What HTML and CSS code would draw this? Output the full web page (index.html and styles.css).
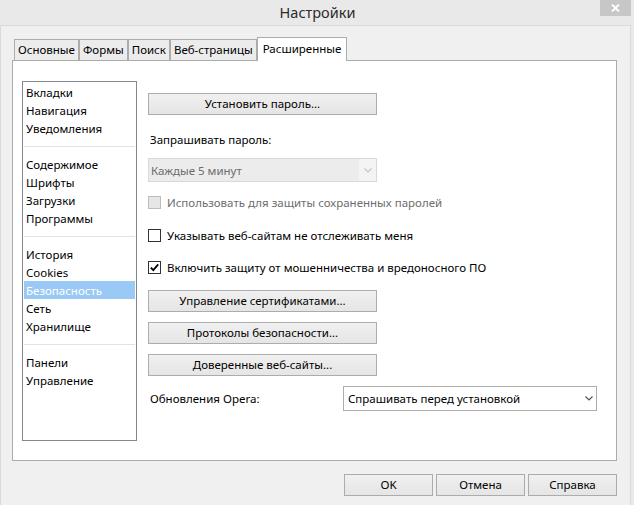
FILE: index.html
```html
<!DOCTYPE html>
<html lang="ru">
<head>
<meta charset="utf-8">
<title>Настройки</title>
<link rel="stylesheet" href="styles.css">
</head>
<body>
<div class="titlebar">
  <span class="title">Настройки</span>
  <div class="close"><svg width="9" height="8" viewBox="0 0 9 8"><path d="M1 0.5 L8 7.5 M8 0.5 L1 7.5" stroke="#fff" stroke-width="1.8"/></svg></div>
</div>
<div class="client">
  <div class="tabs">
    <div class="tab">Основные</div>
    <div class="tab">Формы</div>
    <div class="tab">Поиск</div>
    <div class="tab">Веб-страницы</div>
    <div class="tab active">Расширенные</div>
  </div>
  <div class="panel">
    <ul class="nav">
      <li>Вкладки</li>
      <li>Навигация</li>
      <li>Уведомления</li>
      <li class="sep"></li>
      <li>Содержимое</li>
      <li>Шрифты</li>
      <li>Загрузки</li>
      <li>Программы</li>
      <li class="sep"></li>
      <li>История</li>
      <li>Cookies</li>
      <li class="selected">Безопасность</li>
      <li>Сеть</li>
      <li>Хранилище</li>
      <li class="sep"></li>
      <li>Панели</li>
      <li>Управление</li>
    </ul>
    <div class="content">
      <div class="btn wide first">Установить пароль...</div>
      <div class="label ask">Запрашивать пароль:</div>
      <div class="select disabled">
        <span class="value">Каждые 5 минут</span>
        <span class="arrow"><svg width="8" height="5" viewBox="0 0 8 5"><path d="M0.5 0.5 L4 4 L7.5 0.5" fill="none" stroke="#c4c4c4" stroke-width="1.2"/></svg></span>
      </div>
      <div class="check disabled c1"><span class="box"></span>Использовать для защиты сохраненных паролей</div>
      <div class="check c2"><span class="box"></span>Указывать веб-сайтам не отслеживать меня</div>
      <div class="check c3"><span class="box"><svg width="11" height="11" viewBox="0 0 11 11"><path d="M1.8 5.6 L4.3 8.2 L9.2 2.4" fill="none" stroke="#000" stroke-width="1.8"/></svg></span>Включить защиту от мошенничества и вредоносного ПО</div>
      <div class="btn wide b1">Управление сертификатами...</div>
      <div class="btn wide b2">Протоколы безопасности...</div>
      <div class="btn wide b2">Доверенные веб-сайты...</div>
      <div class="update-row">
        <span class="label update-label">Обновления Opera:</span>
        <div class="select update">
          <span class="value">Спрашивать перед установкой</span>
          <span class="arrow"><svg width="8" height="5" viewBox="0 0 8 5"><path d="M0.5 0.5 L4 4 L7.5 0.5" fill="none" stroke="#555" stroke-width="1.2"/></svg></span>
        </div>
      </div>
    </div>
  </div>
  <div class="footer">
    <div class="btn action">OK</div>
    <div class="btn action">Отмена</div>
    <div class="btn action">Справка</div>
  </div>
</div>
</body>
</html>
```
FILE: styles.css
```css
* { box-sizing: border-box; }
html, body {
  margin: 0;
  padding: 0;
}
body {
  width: 634px;
  height: 505px;
  overflow: hidden;
  background: #e9e9e9;
  font-family: "Noto Sans", "Open Sans", sans-serif;
  font-size: 11.5px;
  color: #000;
}
.titlebar {
  position: relative;
  height: 25px;
  text-align: center;
}
.title {
  display: inline-block;
  font-size: 14.5px;
  line-height: 25px;
  color: #2b2b2b;
  padding-left: 1px;
}
.close {
  position: absolute;
  top: 0;
  right: 3px;
  width: 31px;
  height: 16px;
  background: #c7c7c7;
  display: flex;
  align-items: center;
  justify-content: center;
}
.client {
  margin-right: 3px;
  height: 480px;
  background: #f0f0f0;
  border: 1px solid #dadada;
  border-bottom: none;
  padding: 11px 13px 0 11px;
}
.tabs {
  display: flex;
  align-items: flex-end;
  height: 23px;
  padding-left: 2px;
}
.tab {
  height: 21px;
  line-height: 20px;
  padding: 0 3px;
  border: 1px solid #acacac;
  border-bottom: none;
  background: #ececec;
  white-space: nowrap;
}
.tab.active {
  position: relative;
  z-index: 1;
  height: 24px;
  margin-bottom: -1px;
  line-height: 22px;
  padding: 0 5px;
  background: #fff;
}
.panel {
  display: flex;
  height: 401px;
  background: #fff;
  border: 1px solid #acacac;
  padding: 20px 9px 19px 9px;
}
.nav {
  list-style: none;
  margin: 0;
  width: 115px;
  height: 360px;
  border: 1px solid #828790;
  padding: 1px;
  flex-shrink: 0;
}
.nav li {
  height: 18px;
  line-height: 19px;
  padding-left: 2px;
  white-space: nowrap;
}
.nav li.sep {
  height: 1px;
  margin: 9px 0 8px;
  background: #e3e3e3;
}
.nav li.selected {
  background: #99c9f4;
  color: #fff;
}
.content {
  margin-left: 11px;
  display: flex;
  flex-direction: column;
  align-items: flex-start;
}
.btn {
  height: 22px;
  line-height: 20px;
  text-align: center;
  border: 1px solid #acacac;
  background: linear-gradient(#f0f0f0, #e5e5e5);
  white-space: nowrap;
}
.btn.wide { width: 229px; }
.btn.first { margin-top: 12px; }
.btn.b1 { margin-top: 13px; }
.btn.b2 { margin-top: 10px; }
.label {
  padding-left: 2px;
  line-height: 18px;
}
.label.ask { margin-top: 16px; }
.select {
  display: flex;
  align-items: center;
  height: 24px;
  border: 1px solid #d9d9d9;
}
.select.disabled {
  width: 229px;
  margin-top: 9px;
  background: #ececec;
  color: #6d6d6d;
}
.select .value {
  flex: 1;
  padding-left: 2px;
  white-space: nowrap;
}
.select .arrow {
  width: 17px;
  align-self: stretch;
  display: flex;
  align-items: center;
  justify-content: center;
}
.select.disabled .arrow { background: #f4f4f4; }
.check {
  display: flex;
  align-items: center;
  height: 19px;
  white-space: nowrap;
}
.check .box {
  width: 13px;
  height: 13px;
  margin-right: 6px;
  border: 1px solid #333;
  background: #fff;
  display: flex;
  align-items: center;
  justify-content: center;
}
.check.disabled { color: #6d6d6d; }
.check.disabled .box {
  border-color: #bcbcbc;
  background: #e6e6e6;
}
.check.c1 { margin-top: 11px; }
.check.c2 { margin-top: 14px; }
.check.c3 { margin-top: 13px; }
.update-row {
  display: flex;
  align-items: center;
  margin-top: 10px;
}
.update-label { width: 195px; }
.select.update {
  width: 254px;
  height: 25px;
  background: #fff;
  border-color: #acacac;
}
.select.update .value { padding-left: 4px; }
.select.update .arrow { width: 14px; }
.footer {
  display: flex;
  justify-content: flex-end;
  gap: 3px;
  margin-top: 13px;
}
.btn.action { width: 89px; }
```
